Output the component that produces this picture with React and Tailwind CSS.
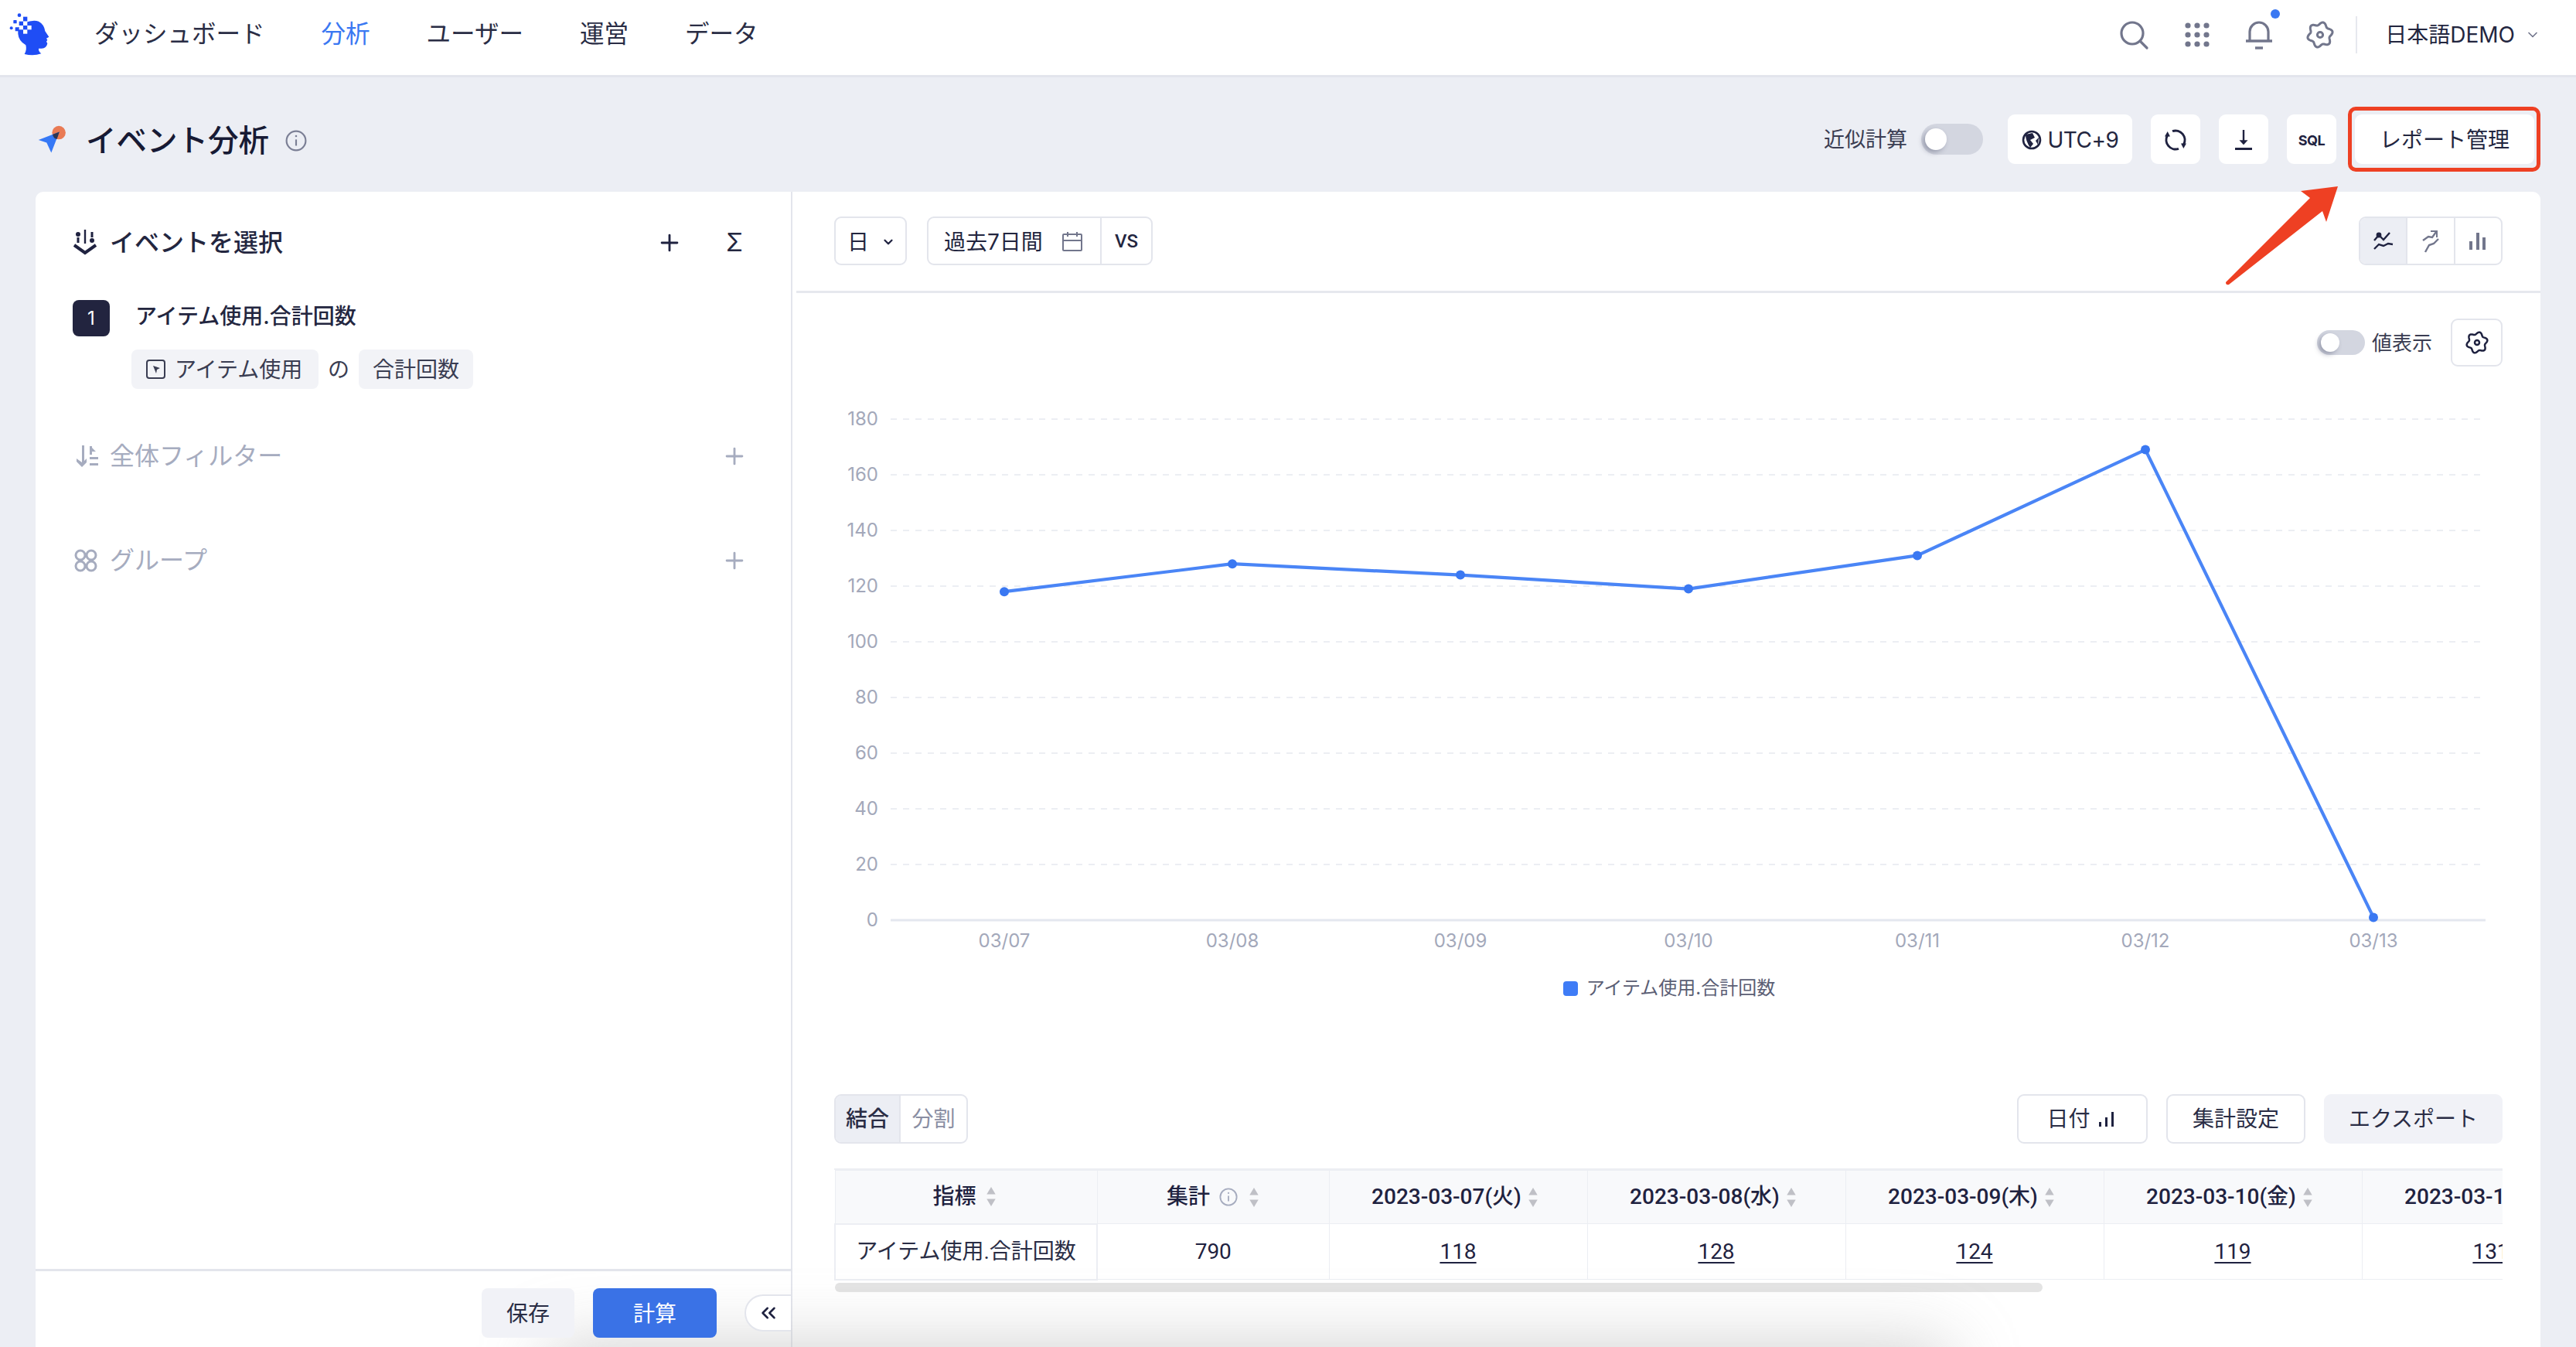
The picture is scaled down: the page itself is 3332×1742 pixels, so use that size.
import { ChevronDown, Plus, ChevronsLeft } from "lucide-react";

const ink = "#1f2240";
const points = [
  [1299, 118],
  [1594, 128],
  [1889, 124],
  [2184, 119],
  [2480, 131],
  [2775, 169],
  [3070, 1],
];
const yTicks = [180, 160, 140, 120, 100, 80, 60, 40, 20, 0];
const toY = (v) => 1189 - v * 3.6;

// wavy cog outline, same shape for all the settings icons
function cogPath(cx, cy, r, amp) {
  const pts = [];
  for (let i = 0; i < 96; i++) {
    const a = (i / 96) * Math.PI * 2;
    const rr = r + amp * Math.cos(a * 6 + Math.PI / 2);
    pts.push(`${(cx + rr * Math.cos(a)).toFixed(2)} ${(cy + rr * Math.sin(a)).toFixed(2)}`);
  }
  return "M" + pts.join("L") + "Z";
}

function Cog({ color = "#72768c", size = 36 }) {
  return (
    <svg width={size} height={size} viewBox="0 0 36 36" fill="none" stroke={color} strokeWidth="3">
      <path d={cogPath(18, 18, 14.5, 2)} strokeLinejoin="round" />
      <circle cx="18" cy="18" r="3.6" />
    </svg>
  );
}

function Logo() {
  return (
    <svg width="100" height="90" viewBox="0 0 300 270">
      <path
        d="M95 85Q130 72 150 80Q172 92 175 118L190 140L180 146L184 152L180 158L184 166Q180 186 160 185L150 185Q148 195 160 205Q130 215 95 207Q105 190 100 172Q72 155 70 128L70 105Z"
        fill="#1f4df5"
      />
      <circle cx="75" cy="56" r="7" fill="#1f4df5" />
      <rect x="52" y="75" width="13" height="13" rx="2" fill="#1f4df5" />
      <circle cx="44" cy="106" r="6" fill="#1f4df5" />
      <rect x="59" y="103" width="15" height="15" rx="2" fill="#1f4df5" />
      <rect x="90" y="62" width="16" height="18" fill="#1f4df5" />
      <rect x="74" y="80" width="16" height="16" fill="#1f4df5" />
      <rect x="90" y="80" width="16" height="16" fill="#fff" />
      <rect x="90" y="96" width="16" height="16" fill="#1f4df5" />
      <rect x="74" y="96" width="16" height="16" fill="#fff" />
      <rect x="106" y="96" width="16" height="16" fill="#fff" />
      <rect x="90" y="112" width="16" height="16" fill="#fff" />
    </svg>
  );
}

function TitleIcon() {
  return (
    <svg width="40" height="40" viewBox="50 35 114 114">
      <circle cx="133" cy="68" r="25" fill="#e97a54" />
      <path d="M58 95L135 65L105 142L88 105Z" fill="#3578f6" strokeLinejoin="round" />
      <path d="M110 75L135 65L126 91Q114 92 110 75Z" fill="#2c3553" />
    </svg>
  );
}

function InfoIcon({ size = 26, color = "#7b7f95" }) {
  return (
    <svg width={size} height={size} viewBox="0 0 26 26" fill="none" stroke={color} strokeWidth="2">
      <circle cx="13" cy="13" r="11.5" />
      <path d="M13 11.5V19" />
      <circle cx="13" cy="7.5" r="1.2" fill={color} stroke="none" />
    </svg>
  );
}

function Sort({ className = "ml-[8px]" }) {
  return (
    <svg width="14" height="27" viewBox="0 0 12 26" fill="#bfc0c6" className={`${className} shrink-0`}>
      <path d="M6 1L11.5 10H.5Z" />
      <path d="M6 25L11.5 16H.5Z" />
    </svg>
  );
}

function Toggle({ w, h, knob }) {
  return (
    <span className={`${w} ${h} flex items-center rounded-full bg-[#d3d6e0] pl-[5px] shrink-0`}>
      <span className={`${knob} rounded-full bg-white shadow-[-3px_3px_6px_rgba(80,85,110,0.45)]`} />
    </span>
  );
}

function ToolBtn({ className = "", children }) {
  return (
    <div className={`h-[64px] bg-white rounded-[9px] pt-[2px] flex items-center justify-center ${className}`}>{children}</div>
  );
}

function Header() {
  return (
    <header className="h-[100px] shrink-0 bg-white border-b-[3px] border-[#e3e5ec] flex items-center relative">
      <div className="w-[122px] shrink-0 -mt-[5px]">
        <Logo />
      </div>
      <nav className="flex gap-[73px] text-[31.5px] text-[#2a2d45] -mt-[10px]">
        <span>ダッシュボード</span>
        <span className="text-[#3a78f2]">分析</span>
        <span>ユーザー</span>
        <span>運営</span>
        <span>データ</span>
      </nav>
      <div className="ml-auto flex items-center -mt-[8px]">
        <svg width="40" height="40" viewBox="0 0 40 40" fill="none" stroke="#72768c" strokeWidth="3.2" className="mr-[44px]">
          <circle cx="18" cy="18" r="14" />
          <path d="M28 28L37 37" strokeLinecap="round" />
        </svg>
        <svg width="36" height="36" viewBox="0 0 36 36" fill="#72768c" className="mr-[44px]">
          {[6, 18, 30].map((y) =>
            [6, 18, 30].map((x) => <circle key={`${x}-${y}`} cx={x} cy={y} r="3.6" />)
          )}
        </svg>
        <div className="relative mr-[43px]">
          <svg width="36" height="40" viewBox="0 0 36 40" fill="none" stroke="#72768c" strokeWidth="3.2" className="block">
            <path d="M6 27V16A12 12 0 0 1 30 16V27" />
            <path d="M1 28H35" strokeWidth="3.4" />
            <path d="M13 37H23" strokeWidth="3.4" />
          </svg>
          <span className="absolute -top-[13px] -right-[9px] w-[12px] h-[12px] rounded-full bg-[#3a78f2]" />
        </div>
        <Cog />
        <span className="w-[2px] h-[48px] bg-[#e6e8ee] ml-[28px] mr-[36px]" />
        <span className="text-[28px] text-[#23263f]">日本語DEMO</span>
        <ChevronDown size={20} color="#72768c" className="ml-[13px] mr-[46px]" strokeWidth={2} />
      </div>
    </header>
  );
}

function PageBar() {
  return (
    <div className="h-[148px] shrink-0 pl-[47px] pr-[54px] pt-[48px] flex items-start justify-between relative">
      <div className="flex items-center h-[64px]">
        <TitleIcon />
        <h1 className="ml-[24px] mt-[5px] text-[39.5px] font-medium text-[#171a34]">イベント分析</h1>
        <span className="ml-[21px] mt-[3px]">
          <InfoIcon size={28} />
        </span>
      </div>
      <div className="flex items-center">
        <span className="text-[27px] text-[#3a3d52] mr-[18px] pt-[2px]">近似計算</span>
        <Toggle w="w-[80px]" h="h-[40px]" knob="w-[28px] h-[28px]" />
        <ToolBtn className="w-[161px] ml-[32px] gap-[8px] text-[28px] text-[#23263f]">
          <svg width="26" height="26" viewBox="0 0 26 26" fill="none">
            <circle cx="13" cy="13" r="11" stroke={ink} strokeWidth="2.6" />
            <path d="M5 6L14 4L17 10L11 13L15 18L11 23Q5 14 5 6ZM22 10L18 14L21 19Z" fill={ink} />
          </svg>
          <span className="tracking-[-0.5px]">UTC+9</span>
        </ToolBtn>
        <ToolBtn className="w-[64px] ml-[24px]">
          <svg width="28" height="30" viewBox="0 0 28 30" fill="none" stroke={ink} strokeWidth="3">
            <path d="M10 3.7A12 12 0 0 1 24.4 21" />
            <path d="M18 26.3A12 12 0 0 1 3.6 9" />
            <path d="M0 10.5H7L3.7 4Z" fill={ink} stroke="none" />
            <path d="M21 19.5H28L24.3 26Z" fill={ink} stroke="none" />
          </svg>
        </ToolBtn>
        <ToolBtn className="w-[64px] ml-[24px]">
          <svg width="24" height="26" viewBox="0 0 24 26" fill="none" stroke={ink} strokeWidth="2.4">
            <path d="M12 0V17" />
            <path d="M7 13.5L12 19L17 13.5Z" fill={ink} strokeWidth="0.5" />
            <path d="M1 24.5H23" strokeWidth="3" />
          </svg>
        </ToolBtn>
        <ToolBtn className="w-[64px] ml-[24px] text-[18px] font-bold text-[#1f2240] tracking-[-0.5px]">SQL</ToolBtn>
        <ToolBtn className="w-[232px] ml-[24px] text-[28px] text-[#23263f] relative">
          レポート管理
          <span className="absolute -left-[9px] -right-[8px] -top-[10px] -bottom-[10px] border-[5px] border-[#ee4023] rounded-[10px]" />
        </ToolBtn>
      </div>
    </div>
  );
}

function SectionIcon() {
  return (
    <svg width="32" height="34" viewBox="0 0 32 34" fill="none" stroke={ink} strokeWidth="3">
      <path d="M2 20L16 30L30 20" strokeWidth="4" />
      <path d="M16 0V18" strokeWidth="2.4" />
      <circle cx="7" cy="6" r="3" fill={ink} stroke="none" />
      <path d="M7 10V17" strokeWidth="3" />
      <circle cx="25" cy="14" r="3" fill={ink} stroke="none" />
      <path d="M25 3V10" strokeWidth="3" />
    </svg>
  );
}

function EventPanel() {
  return (
    <aside className="w-[979px] shrink-0 border-r-2 border-[#e3e5ec] flex flex-col">
      <div className="flex-1 pl-[48px] pr-[56px] pt-[42px]">
        <div className="h-[48px] flex items-center">
          <SectionIcon />
          <span className="ml-[16px] text-[32px] font-medium text-[#23263f]">イベントを選択</span>
          <Plus size={34} color={ink} strokeWidth={2} className="ml-auto" />
          <span className="w-[34px] ml-[50px] text-center text-[32px] text-[#23263f]">Σ</span>
        </div>
        <div className="mt-[50px] h-[47px] flex items-center">
          <span className="w-[48px] h-[47px] rounded-[8px] bg-[#22243f] text-white text-[24px] flex items-center justify-center">
            1
          </span>
          <span className="ml-[33px] -mt-[5px] text-[28px] font-medium text-[#23263f]">アイテム使用.合計回数</span>
        </div>
        <div className="mt-[17px] ml-[76px] flex items-center text-[28px] text-[#3a3d52]">
          <span className="h-[51px] w-[242px] rounded-[8px] bg-[#f2f3f7] flex items-center pl-[19px]">
            <svg width="25" height="25" viewBox="0 0 25 25" fill="none" stroke="#3a3d52" strokeWidth="2" className="mr-[12px]">
              <rect x="1" y="1" width="23" height="23" rx="3" />
              <path d="M9 8L18 11L14 13L13 18Z" fill="#3a3d52" stroke="none" />
            </svg>
            アイテム使用
          </span>
          <span className="w-[52px] text-center">の</span>
          <span className="h-[51px] w-[148px] rounded-[8px] bg-[#f2f3f7] flex items-center justify-center">合計回数</span>
        </div>
        <div className="mt-[63px] h-[48px] flex items-center text-[32px] text-[#a6acbf]">
          <svg width="30" height="28" viewBox="0 0 30 28" fill="#a6acbf" className="ml-[4px]">
            <path d="M8 0H11V20L14 17V22L8 28L1 21V17L8 22Z" />
            <path d="M18 1H21V3L26 8H21V12H18ZM18 15H29V18H18ZM18 23H29V26H18Z" />
          </svg>
          <span className="ml-[14px]">全体フィルター</span>
          <Plus size={34} color="#a6acbf" strokeWidth={2} className="ml-auto" />
        </div>
        <div className="mt-[87px] h-[48px] flex items-center text-[32px] text-[#a6acbf]">
          <svg width="30" height="30" viewBox="0 0 30 30" fill="none" stroke="#a6acbf" strokeWidth="3" className="ml-[2px]">
            <circle cx="8" cy="8" r="6" />
            <circle cx="22" cy="8" r="6" />
            <circle cx="8" cy="22" r="6" />
            <circle cx="22" cy="22" r="6" />
          </svg>
          <span className="ml-[16px]">グループ</span>
          <Plus size={34} color="#a6acbf" strokeWidth={2} className="ml-auto" />
        </div>
      </div>
      <div className="h-[101px] shrink-0 border-t-[3px] border-[#e3e5ec] pt-[22px] flex justify-end items-start relative z-10">
        <button className="w-[120px] h-[64px] pt-[2px] rounded-[8px] bg-[#f1f2f7] text-[28px] text-[#2a2d45]">保存</button>
        <button className="w-[160px] h-[64px] pt-[2px] ml-[24px] rounded-[8px] bg-[#3a72e6] text-[28px] text-white">計算</button>
        <button className="w-[60px] h-[48px] ml-[36px] mt-[8px] rounded-l-full border-2 border-r-0 border-[#e3e5ec] bg-white flex items-center justify-center">
          <ChevronsLeft size={30} color={ink} strokeWidth={2} />
        </button>
      </div>
    </aside>
  );
}

function Chart() {
  const line = points.map(([x, v]) => `${x},${toY(v)}`).join(" ");
  return (
    <svg width="2261" height="782" viewBox="1025 473 2261 782" className="block shrink-0" fontFamily="Inter, sans-serif">
      {yTicks.map((t) => (
        <g key={t}>
          {t > 0 && <line x1="1152" x2="3215" y1={toY(t)} y2={toY(t)} stroke="#eceef3" strokeWidth="2" strokeDasharray="8 8" />}
          <text x="1136" y={toY(t) + 8} textAnchor="end" fontSize="24" fill="#a3a8ba">
            {t}
          </text>
        </g>
      ))}
      <line x1="1152" x2="3215" y1="1189" y2="1189" stroke="#e4e7ef" strokeWidth="3" />
      {points.map(([x], i) => (
        <text key={x} x={x} y="1224" textAnchor="middle" fontSize="24" fill="#a3a8ba">
          {`03/${String(7 + i).padStart(2, "0")}`}
        </text>
      ))}
      <polyline points={line} fill="none" stroke="#4a85f6" strokeWidth="4.2" strokeLinejoin="round" />
      {points.map(([x, v]) => (
        <circle key={x} cx={x} cy={toY(v)} r="6" fill="#3a78f2" />
      ))}
    </svg>
  );
}

function ChartTypes() {
  return (
    <div className="flex h-[63px] w-[186px] rounded-[9px] border-2 border-[#e3e5ec] overflow-hidden">
      <div className="flex-1 bg-[#eceef4] border-r-2 border-[#e3e5ec] flex items-center justify-center">
        <svg width="26" height="24" viewBox="0 0 26 24" fill="none" stroke={ink} strokeWidth="2.4">
          <path d="M1 11L7 4L13 10L21 1" />
          <circle cx="7" cy="4" r="3.4" fill={ink} stroke="none" />
          <path d="M1 22L7 16L13 18L19 15L25 16" />
        </svg>
      </div>
      <div className="flex-1 border-r-2 border-[#e3e5ec] flex items-center justify-center">
        <svg width="24" height="30" viewBox="0 0 24 30" fill="none" stroke="#72768c" strokeWidth="2.4">
          <path d="M2 14L9 9L14 10L19 3" />
          <path d="M12 2H20V10" strokeWidth="2" />
          <path d="M5 29L10 20L16 18L22 12" />
        </svg>
      </div>
      <div className="flex-1 flex items-center justify-center">
        <svg width="24" height="22" viewBox="0 0 24 22" fill="#72768c">
          <rect x="1" y="11" width="4" height="11" />
          <rect x="10" y="0" width="4" height="22" />
          <rect x="18" y="6" width="4" height="16" />
        </svg>
      </div>
    </div>
  );
}

function ResultTable() {
  const dates = ["2023-03-07(火)", "2023-03-08(水)", "2023-03-09(木)", "2023-03-10(金)", "2023-03-11(土)"];
  const values = [118, 128, 124, 119, 131];
  const th = "border border-[#eceef3] font-medium p-0";
  return (
    <div className="ml-[54px] mr-[49px] mt-[32px] overflow-hidden border-t-2 border-[#eceef3]">
      <table className="table-fixed w-[2309px] border-collapse text-[28px] text-[#1f2240] font-['Roboto','Noto_Sans_CJK_JP',sans-serif]">
        <colgroup>
          <col className="w-[339px]" />
          <col className="w-[300px]" />
          {dates.map((d) => (
            <col key={d} className="w-[334px]" />
          ))}
        </colgroup>
        <thead>
          <tr className="h-[69px] bg-[#f8f9fb]">
            <th className={th}>
              <span className="flex items-center justify-center pr-[4px]">指標<Sort className="ml-[12px]" /></span>
            </th>
            <th className={th}>
              <span className="flex items-center justify-center">
                集計
                <span className="ml-[12px] flex">
                  <InfoIcon size={24} color="#a6acbf" />
                </span>
                <Sort className="ml-[14px]" />
              </span>
            </th>
            {dates.map((d) => (
              <th key={d} className={th}>
                <span className="flex items-center justify-center whitespace-nowrap pr-[8px]">{d}<Sort /></span>
              </th>
            ))}
          </tr>
        </thead>
        <tbody>
          <tr className="h-[72px]">
            <td className="border-2 border-[#eceef3] text-center whitespace-nowrap text-[#2a2d45]">アイテム使用.合計回数</td>
            <td className="border border-[#eceef3] text-center">790</td>
            {values.map((v) => (
              <td key={v} className="border border-[#eceef3] text-center underline underline-offset-4">
                {v}
              </td>
            ))}
          </tr>
        </tbody>
      </table>
    </div>
  );
}

function ChartPanel() {
  return (
    <section className="flex-1 min-w-0 flex flex-col">
      <div className="h-[131px] shrink-0 ml-[5px] pl-[49px] pr-[49px] pt-[32px] border-b-[3px] border-[#e6e8ee] flex items-start justify-between">
        <div className="flex items-center text-[28px] text-[#23263f]">
          <div className="h-[63px] w-[94px] rounded-[9px] border-2 border-[#e3e5ec] pt-[2px] flex items-center pl-[15px]">
            日
            <ChevronDown size={18} color={ink} strokeWidth={3} className="ml-[16px]" />
          </div>
          <div className="h-[63px] w-[292px] ml-[26px] rounded-[9px] border-2 border-[#e3e5ec] flex items-center">
            <span className="pl-[20px] pt-[2px] whitespace-nowrap">過去7日間</span>
            <svg width="26" height="26" viewBox="0 0 26 26" fill="none" stroke="#72768c" strokeWidth="2" className="ml-[25px] shrink-0">
              <rect x="1" y="4" width="24" height="21" rx="1" />
              <path d="M1 12H25M7 1V7M19 1V7" />
            </svg>
            <span className="w-[2px] h-full bg-[#e3e5ec] ml-[23px]" />
            <span className="flex-1 text-center text-[24px] font-medium font-['Roboto',sans-serif]">VS</span>
          </div>
        </div>
        <ChartTypes />
      </div>
      <div className="mt-[33px] mr-[49px] flex items-center justify-end h-[62px] shrink-0">
        <Toggle w="w-[62px]" h="h-[32px]" knob="w-[24px] h-[24px]" />
        <span className="ml-[9px] text-[26px] text-[#3a3d52]">値表示</span>
        <div className="ml-[24px] w-[67px] h-[62px] rounded-[9px] border-2 border-[#e3e5ec] flex items-center justify-center">
          <Cog color={ink} size={30} />
        </div>
      </div>
      <Chart />
      <div className="h-[44px] shrink-0 pl-[7px] flex items-center justify-center text-[24px] text-[#5b5e74]">
        <span className="w-[19px] h-[19px] rounded-[4px] bg-[#3f7cf6] mr-[11px]" />
        アイテム使用.合計回数
      </div>
      <div className="mt-[115px] ml-[54px] mr-[49px] flex justify-between text-[28px] text-[#2a2d45] shrink-0">
        <div className="flex h-[64px] w-[173px] rounded-[9px] border-2 border-[#e3e5ec] overflow-hidden">
          <span className="w-[84px] bg-[#eceef4] border-r-2 border-[#e3e5ec] flex items-center justify-center font-medium">結合</span>
          <span className="flex-1 flex items-center justify-center text-[#8a8ea3]">分割</span>
        </div>
        <div className="flex items-center gap-[24px]">
          <span className="h-[64px] w-[169px] pr-[4px] rounded-[9px] border-2 border-[#e3e5ec] flex items-center justify-center">
            日付
            <svg width="22" height="20" viewBox="0 0 22 20" fill={ink} className="ml-[10px]">
              <rect x="1" y="14" width="3" height="6" />
              <rect x="9" y="8" width="3" height="12" />
              <rect x="17" y="1" width="3" height="19" />
            </svg>
          </span>
          <span className="h-[64px] w-[180px] rounded-[9px] border-2 border-[#e3e5ec] flex items-center justify-center">集計設定</span>
          <span className="h-[64px] w-[231px] rounded-[9px] bg-[#f1f2f7] flex items-center justify-center">エクスポート</span>
        </div>
      </div>
      <ResultTable />
      <div className="ml-[55px] mt-[3px] w-[1562px] h-[12px] shrink-0 rounded-full bg-[#e4e4e4]" />
    </section>
  );
}

export default function App() {
  return (
    <div className="relative w-full h-screen overflow-hidden flex flex-col bg-[#eceef4] font-['Inter','Noto_Sans_CJK_JP',sans-serif]">
      <Header />
      <PageBar />
      <main className="flex-1 min-h-0 mx-[46px] bg-white rounded-t-[10px] flex overflow-hidden">
        <EventPanel />
        <ChartPanel />
      </main>

      {/* soft shadow from the panel hidden below the fold */}
      <div className="absolute left-[760px] top-[1790px] w-[1710px] h-[60px] bg-[#cfcfcf] shadow-[0_0_90px_50px_rgba(190,190,190,0.7)]" />

      {/* annotation arrow added on top of the screenshot */}
      <svg className="absolute left-[2870px] top-[235px]" width="160" height="140" viewBox="2870 235 160 140">
        <path d="M3024 241L2976 247L2988 256L2879 365Q2879 369 2883 368L3004 273L3009 287Z" fill="#ee4023" />
      </svg>
    </div>
  );
}
